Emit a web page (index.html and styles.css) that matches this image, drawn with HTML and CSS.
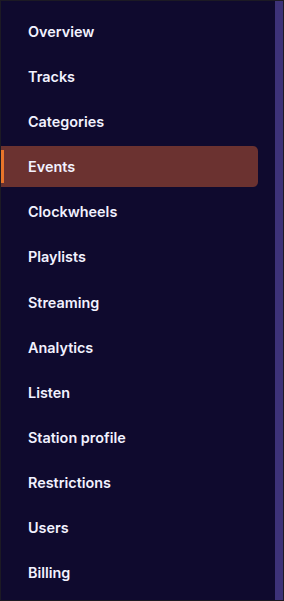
FILE: index.html
```html
<!DOCTYPE html>
<html>
<head>
<meta charset="utf-8">
<link rel="stylesheet" href="styles.css">
</head>
<body>
<div class="frame">
  <nav class="sidebar">
    <a class="item">Overview</a>
    <a class="item">Tracks</a>
    <a class="item">Categories</a>
    <a class="item active">Events</a>
    <a class="item">Clockwheels</a>
    <a class="item">Playlists</a>
    <a class="item">Streaming</a>
    <a class="item">Analytics</a>
    <a class="item">Listen</a>
    <a class="item">Station profile</a>
    <a class="item">Restrictions</a>
    <a class="item">Users</a>
    <a class="item">Billing</a>
  </nav>
  <div class="scrollbar"></div>
</div>
</body>
</html>
```
FILE: styles.css
```css
html, body {
  margin: 0;
  padding: 0;
  background: #0f0a2e;
}
.frame {
  width: 284px;
  height: 601px;
  box-sizing: border-box;
  border: 1px solid #1c1a24;
  display: flex;
  background: #0f0a2e;
  overflow: hidden;
}
.sidebar {
  flex: 1;
  display: flex;
  flex-direction: column;
  gap: 4.1px;
  padding: 10px 17px 0 0;
}
.scrollbar {
  width: 8px;
  background: #3d3278;
}
.item {
  position: relative;
  height: 41px;
  flex: none;
  display: flex;
  align-items: center;
  padding-left: 27px;
  font-family: Inter, "Noto Sans", sans-serif;
  font-weight: 600;
  font-size: 14.4px;
  color: #f2f2ff;
  border-radius: 0 5px 5px 0;
}
.item.active {
  background: #6b3230;
}
.item.active::before {
  content: "";
  position: absolute;
  left: 0;
  top: 4px;
  bottom: 4px;
  width: 3px;
  background: #e8742a;
}
```
